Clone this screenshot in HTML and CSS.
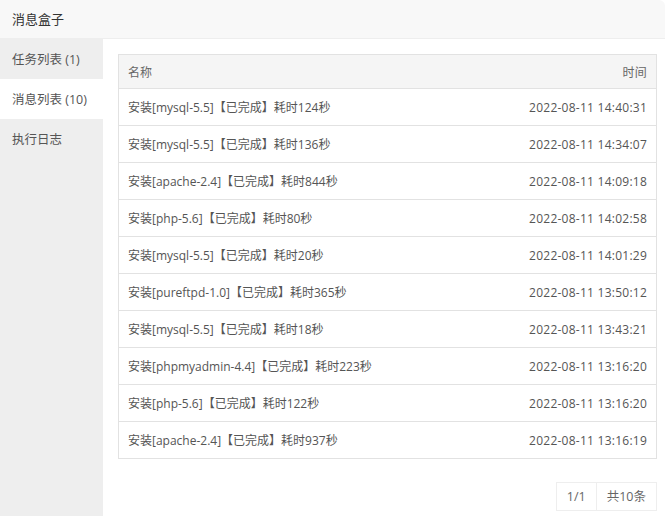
FILE: index.html
```html
<!DOCTYPE html>
<html lang="zh-CN">
<head>
  <meta charset="UTF-8">
  <title>消息盒子</title>
  <link rel="stylesheet" href="styles.css">
</head>
<body>
  <div class="layer">
    <div class="layer-title">消息盒子</div>
    <div class="layer-body">
      <ul class="side-tabs">
        <li class="tab">任务列表 (1)</li>
        <li class="tab active">消息列表 (10)</li>
        <li class="tab">执行日志</li>
      </ul>
      <div class="content">
        <table class="msg-table">
          <thead>
            <tr><th>名称</th><th class="col-time">时间</th></tr>
          </thead>
          <tbody>
            <tr><td>安装[mysql-5.5]【已完成】耗时124秒</td><td class="col-time">2022-08-11 14:40:31</td></tr>
            <tr><td>安装[mysql-5.5]【已完成】耗时136秒</td><td class="col-time">2022-08-11 14:34:07</td></tr>
            <tr><td>安装[apache-2.4]【已完成】耗时844秒</td><td class="col-time">2022-08-11 14:09:18</td></tr>
            <tr><td>安装[php-5.6]【已完成】耗时80秒</td><td class="col-time">2022-08-11 14:02:58</td></tr>
            <tr><td>安装[mysql-5.5]【已完成】耗时20秒</td><td class="col-time">2022-08-11 14:01:29</td></tr>
            <tr><td>安装[pureftpd-1.0]【已完成】耗时365秒</td><td class="col-time">2022-08-11 13:50:12</td></tr>
            <tr><td>安装[mysql-5.5]【已完成】耗时18秒</td><td class="col-time">2022-08-11 13:43:21</td></tr>
            <tr><td>安装[phpmyadmin-4.4]【已完成】耗时223秒</td><td class="col-time">2022-08-11 13:16:20</td></tr>
            <tr><td>安装[php-5.6]【已完成】耗时122秒</td><td class="col-time">2022-08-11 13:16:20</td></tr>
            <tr><td>安装[apache-2.4]【已完成】耗时937秒</td><td class="col-time">2022-08-11 13:16:19</td></tr>
          </tbody>
        </table>
        <div class="pager">
          <span class="page-item">1/1</span>
          <span class="page-item">共10条</span>
        </div>
      </div>
    </div>
  </div>
</body>
</html>
```

FILE: styles.css
```css
* {
  margin: 0;
  padding: 0;
  box-sizing: border-box;
}

body {
  width: 665px;
  height: 516px;
  overflow: hidden;
  font-family: "Open Sans", "Noto Sans CJK SC", sans-serif;
  font-size: 12px;
  color: #555;
  background: #fff;
}

.layer {
  height: 516px;
  display: flex;
  flex-direction: column;
  border-top-right-radius: 6px;
  overflow: hidden;
}

.layer-title {
  height: 39px;
  line-height: 38px;
  padding-left: 12px;
  font-size: 13px;
  color: #333;
  background: #f8f8f8;
  border-bottom: 1px solid #eee;
}

.layer-body {
  flex: 1;
  display: flex;
}

.side-tabs {
  list-style: none;
  width: 103px;
  background: #eee;
}

.tab {
  height: 40px;
  line-height: 41px;
  padding-left: 12px;
  color: #555;
  font-size: 12.5px;
}

.tab.active {
  background: #fff;
}

.content {
  flex: 1;
  padding: 15px 8px 0 15px;
}

.msg-table {
  width: 100%;
  border-collapse: collapse;
  border: 1px solid #e2e2e2;
}

.msg-table th,
.msg-table td {
  text-align: left;
  font-weight: normal;
  padding: 0 9px;
  border-bottom: 1px solid #e2e2e2;
  white-space: nowrap;
}

.msg-table th {
  height: 34px;
  background: #f5f5f5;
  color: #666;
}

.msg-table td {
  height: 37px;
}

.msg-table .col-time {
  text-align: right;
  letter-spacing: 0.25px;
}

.pager {
  display: flex;
  justify-content: flex-end;
  margin-top: 23px;
}

.page-item {
  height: 29px;
  line-height: 27px;
  padding: 0 10px;
  border: 1px solid #eee;
  color: #666;
  font-size: 12.5px;
}

.page-item + .page-item {
  border-left: none;
}
```
